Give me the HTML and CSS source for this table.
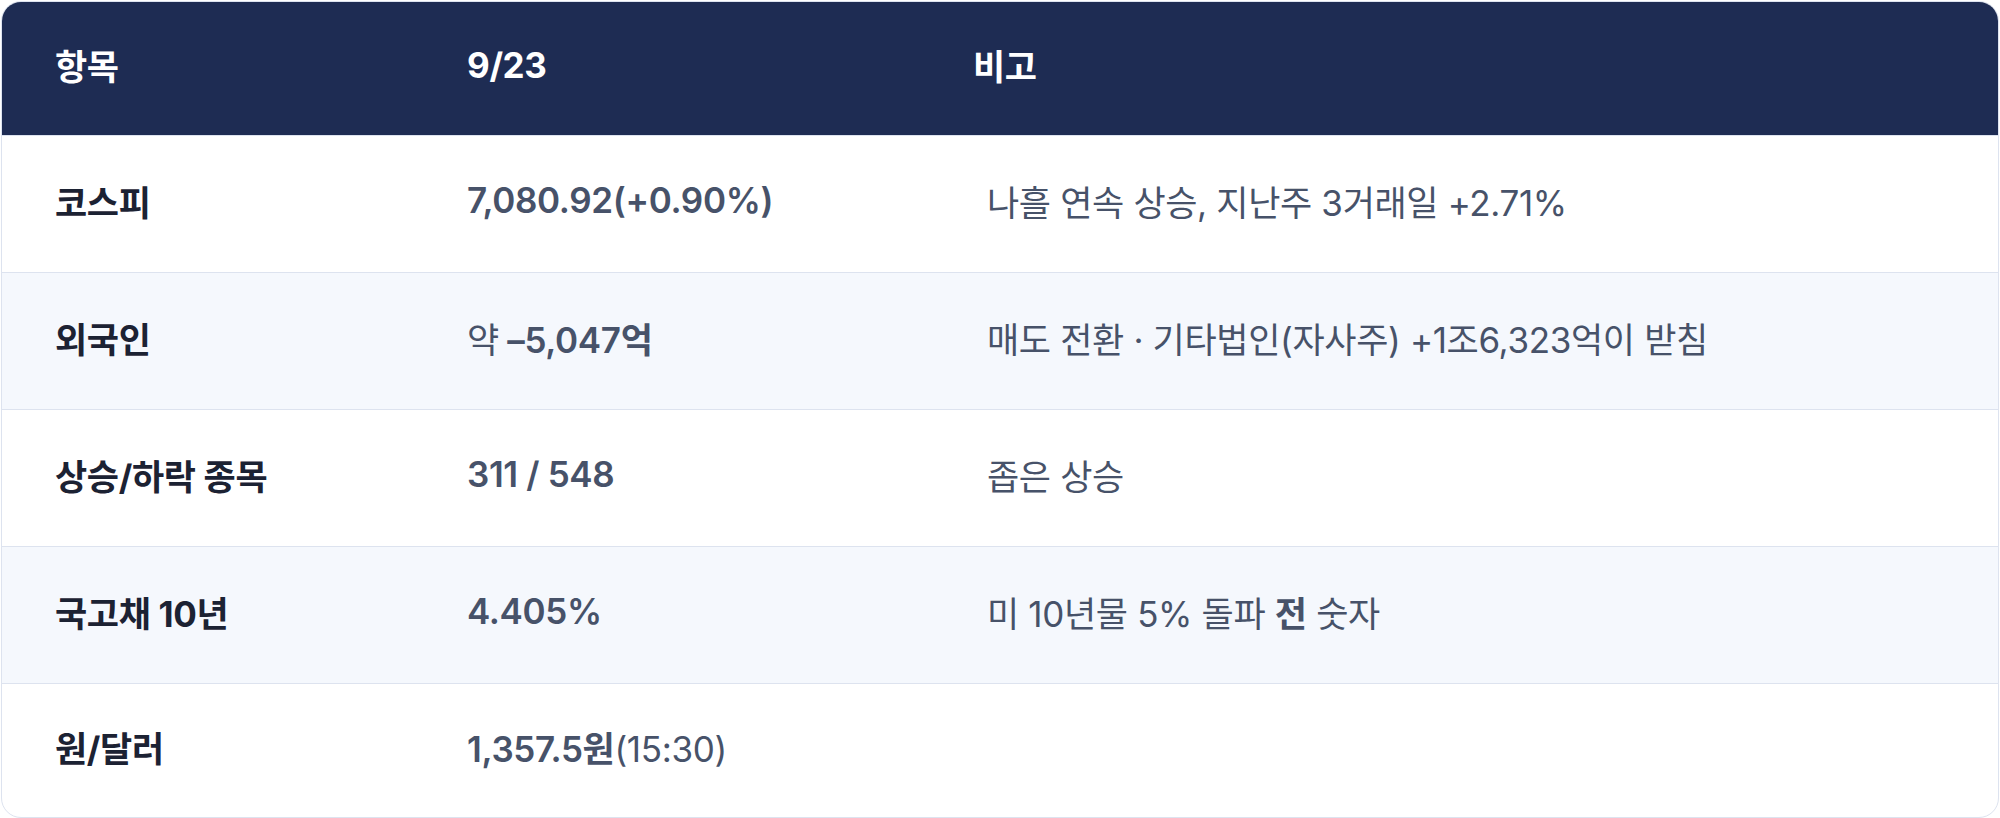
FILE: index.html
```html
<!DOCTYPE html>
<html lang="ko">
<head>
<meta charset="utf-8">
<link rel="stylesheet" href="styles.css">
</head>
<body>
<div class="table">
  <div class="row head">
    <div class="cell">항목</div>
    <div class="cell">9/23</div>
    <div class="cell note-head">비고</div>
  </div>
  <div class="row">
    <div class="cell label">코스피</div>
    <div class="cell value">7,080.92(+0.90%)</div>
    <div class="cell note">나흘 연속 상승, 지난주 3거래일 +2.71%</div>
  </div>
  <div class="row alt">
    <div class="cell label">외국인</div>
    <div class="cell value"><span class="reg">약</span> –5,047억</div>
    <div class="cell note">매도 전환 · 기타법인(자사주) +1조6,323억이 받침</div>
  </div>
  <div class="row">
    <div class="cell label">상승/하락 종목</div>
    <div class="cell value">311 / 548</div>
    <div class="cell note">좁은 상승</div>
  </div>
  <div class="row alt">
    <div class="cell label">국고채 10년</div>
    <div class="cell value">4.405%</div>
    <div class="cell note">미 10년물 5% 돌파 <b>전</b> 숫자</div>
  </div>
  <div class="row last">
    <div class="cell label">원/달러</div>
    <div class="cell value">1,357.5원<span class="reg">(15:30)</span></div>
    <div class="cell note"></div>
  </div>
</div>
</body>
</html>
```
FILE: styles.css
```css
html, body {
  margin: 0;
  padding: 0;
  background: #ffffff;
}
body {
  padding: 1px 1px 1px 1px;
  font-family: Inter, "Noto Sans CJK KR", sans-serif;
}
.table {
  border: 1px solid #dde3ef;
  border-radius: 20px;
  overflow: hidden;
  background: #ffffff;
}
.row {
  display: grid;
  grid-template-columns: 412px 520px 1fr;
  align-items: center;
  height: 137px;
  border-top: 1px solid #dde3ef;
  box-sizing: border-box;
  font-size: 35px;
  letter-spacing: -0.35px;
}
.row.head {
  height: 133px;
  border-top: none;
  background: #1e2c53;
  color: #ffffff;
  font-weight: 700;
}
.row.last {
  height: 134px;
}
.row.alt {
  background: #f5f8fd;
}
.cell {
  padding-left: 53px;
  padding-bottom: 8px;
  white-space: nowrap;
}
.note-head {
  padding-left: 39px;
}
.label {
  font-weight: 700;
  color: #1c2233;
}
.value {
  font-weight: 600;
  color: #475269;
}
.value .reg {
  font-weight: 400;
}
.note {
  font-weight: 400;
  color: #475269;
}
.note b {
  font-weight: 700;
}
```
